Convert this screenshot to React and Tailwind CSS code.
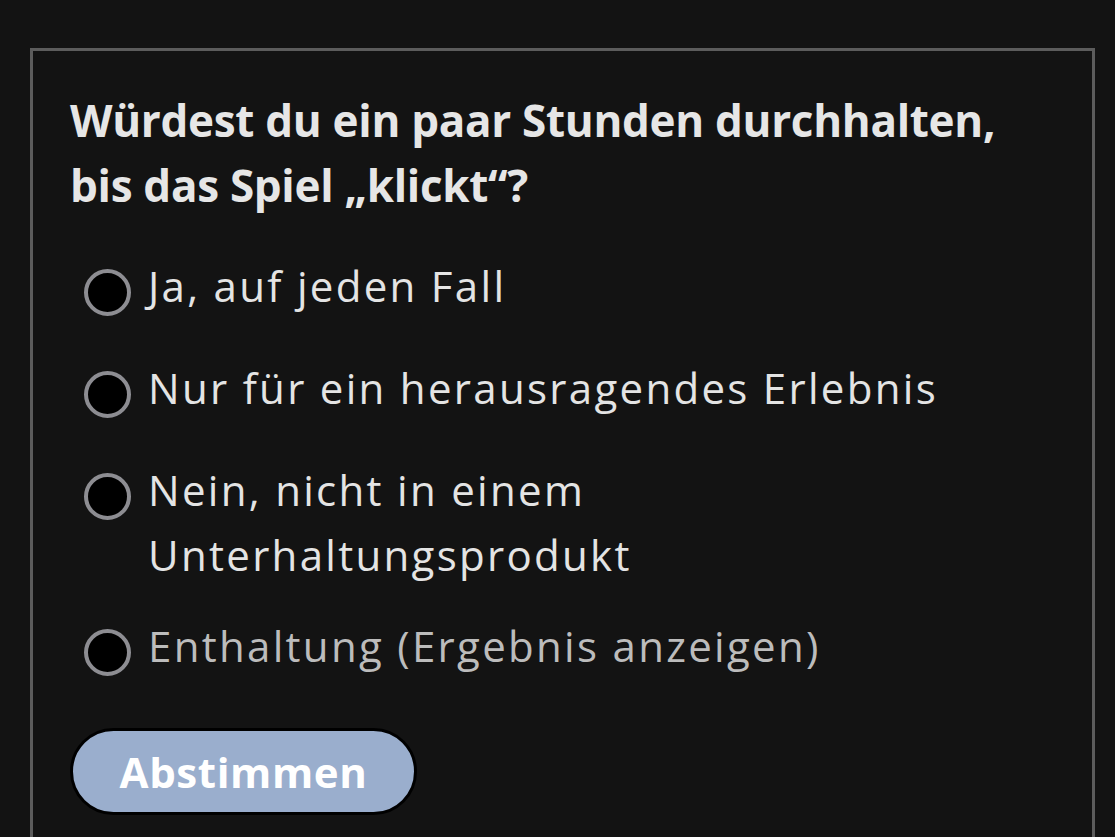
export default function App() {
  const options = [
    { label: "Ja, auf jeden Fall", mt: "mt-0", dim: false },
    { label: "Nur für ein herausragendes Erlebnis", mt: "mt-[37px]", dim: false },
    { label: "Nein, nicht in einem Unterhaltungsprodukt", mt: "mt-[37px]", dim: false },
    { label: "Enthaltung (Ergebnis anzeigen)", mt: "mt-[26px]", dim: true },
  ];
  return (
    <div className="min-h-[837px] h-[837px] overflow-hidden bg-[#131313] pt-[48px] pl-[30px] pr-[20px]">
      <div className="h-[900px] border-[3px] border-[#5c5c5c] pl-[37px] pr-[30px] pt-[37px]">
        <h2
          className="text-[44px] leading-[65px] font-bold text-[#e6e6e6] tracking-[-0.3px]"
          style={{ fontFamily: '"Open Sans", "Noto Sans", sans-serif' }}
        >
          Würdest du ein paar Stunden durchhalten,
          <br />
          bis das Spiel „klickt“?
        </h2>
        <div className="mt-[35px] pl-[14px]">
          {options.map((o) => (
            <div key={o.label} className={`flex items-start ${o.mt}`}>
              <div className="mt-[16px] w-[47px] h-[47px] shrink-0 rounded-full border-[4px] border-[#8d8d92] bg-black" />
              <div
                className={`ml-[17px] text-[42px] leading-[65px] tracking-[2.3px] max-w-[850px] ${o.dim ? "text-[#bcbcbc]" : "text-[#e4e4e4]"}`}
                style={{ fontFamily: '"Open Sans", "Noto Sans", sans-serif', fontWeight: 400 }}
              >
                {o.label === "Nein, nicht in einem Unterhaltungsprodukt" ? (
                  <>
                    Nein, nicht in einem
                    <br />
                    Unterhaltungsprodukt
                  </>
                ) : (
                  o.label
                )}
              </div>
            </div>
          ))}
        </div>
        <button
          className="mt-[50px] w-[347px] h-[87px] rounded-full border-[3px] border-black bg-[#9aaecd] text-white text-[42px] font-bold flex items-center justify-center tracking-[0.6px]"
          style={{ fontFamily: '"Open Sans", "Noto Sans", sans-serif' }}
        >
          Abstimmen
        </button>
      </div>
    </div>
  );
}
